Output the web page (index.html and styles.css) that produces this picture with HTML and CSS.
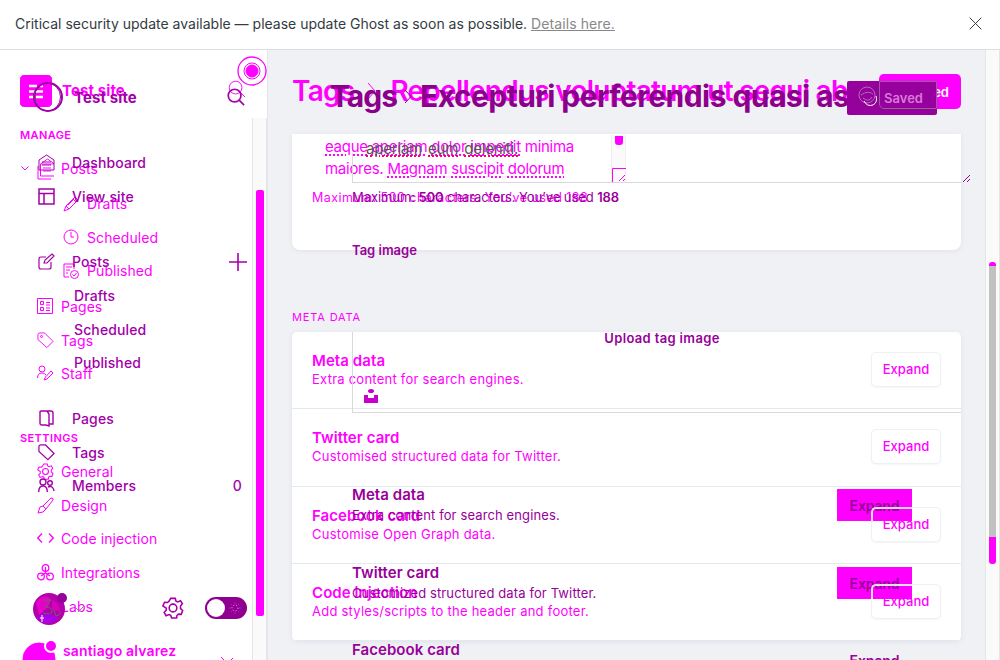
FILE: index.html
```html
<!DOCTYPE html>
<html lang="en">
<head>
<meta charset="utf-8">
<title>Test site - Tags</title>
<link rel="stylesheet" href="styles.css">
</head>
<body>
<svg class="defs" width="0" height="0">
  <symbol id="search" viewBox="0 0 20 20"><circle cx="8" cy="8" r="6.7"/><path d="M13 13l5 5"/></symbol>
  <symbol id="gear" viewBox="0 0 24 24"><circle cx="12" cy="12" r="4.2"/><path d="M9.500 1.500h5l.8 3 1.700.8 3.200-1.300 2 3.400-2 2.400v2.800l2.300 2-1.500 4.300-3.200-.2-1.500 1.500-.3 2.800h-5.500l-1-3-1.700-.8-3.400 1.200-2-3.600 2.200-2.300v-2.400L1 9.700l1.800-4 3.200.3 1.700-1.500z"/></symbol>
  <symbol id="tag" viewBox="0 0 18 18"><path d="M1 3q0-2 2-2h5l9 9-6.500 6.500L1 8z"/></symbol>
</svg>
<div class="app">
  <header class="banner">
    <p>Critical security update available — please update Ghost as soon as possible. <a>Details here.</a></p>
    <svg width="13" height="13" viewBox="0 0 13 13"><path d="M.7.7l11.6 11.6M12.3.7L.7 12.3"/></svg>
  </header>
  <div class="body">
    <aside class="side">
      <nav class="pink nav">
        <div class="brand"><svg width="32" height="32" viewBox="0 0 32 32"><rect width="32" height="32" rx="5" fill="#f0f"/><path d="M9 11h8m3 0h3M9 16.500h14M9 22h4m3 0h7" stroke="#fff" stroke-width="2.500"/></svg><b>Test site</b><svg class="find" width="19" height="19"><use href="#search"/></svg></div>
        <h6>MANAGE</h6>
        <div class="row posts"><svg class="chev" width="8" height="5"><path d="M.5.5L4 4 7.500.5"/></svg><svg width="18" height="22"><path d="M3.500 6h14v12h-14zM1 8v13h13M6 10h8M6 13h8M3.500 6l7-5 7 5"/></svg>Posts</div>
        <div class="row sub"><svg width="16" height="16"><path d="M1 15l2-5L12 1l3 3-9 9zM3 10l3 3M10 3l3 3M5 9l5-5"/></svg>Drafts</div>
        <div class="row sub"><svg width="16" height="16"><circle cx="8" cy="8" r="7"/><path d="M8 3v5h3"/></svg>Scheduled</div>
        <div class="row sub"><svg width="16" height="16"><path d="M6 14H1V1h10v5M3 4h6M3 7h4M3 10h2"/><circle cx="11.500" cy="11.500" r="4"/><path d="M9.500 11.500l1.500 1.500 2.500-3"/></svg>Published</div>
        <div class="row pages"><svg width="17" height="17"><path d="M.5.5h15v15H.5zM3.500 3.500h3v3h-3zM3.500 9.500h3v3h-3zM9 4.500h4M9 7h4M9 10h4M9 12.500h4"/></svg>Pages</div>
        <div class="row"><svg width="17" height="17"><use href="#tag"/><circle cx="4.500" cy="4.500" r="1"/></svg>Tags</div>
        <div class="row"><svg width="17" height="17"><circle cx="5" cy="4" r="3"/><path d="M.5 13q0-5 4.500-5 3 0 4 2M7 15l1.500-3L14 6l2 2-6 6z"/></svg>Staff</div>
        <h6 class="settings">SETTINGS</h6>
        <div class="row"><svg width="17" height="17" stroke-width="1.500"><use href="#gear"/></svg>General</div>
        <div class="row"><svg width="17" height="17"><path d="M6 9l8-8q3 0 2 2L9 12zM6 9q-4 0-4 4l-1 3q6 0 8-4"/></svg>Design</div>
        <div class="row"><svg width="17" height="17" stroke-width="1.300"><path d="M5 3.500L.7 8 5 12.500M12 3.500L16.300 8 12 12.500"/></svg>Code injection</div>
        <div class="row"><svg width="17" height="17" stroke-width="1.300"><circle cx="8.500" cy="4" r="3.300"/><circle cx="4" cy="12.500" r="3.300"/><circle cx="13" cy="12.500" r="3.300"/><path d="M8.500 3v6M4 12l4.500-3 4.500 3"/></svg>Integrations</div>
        <div class="row"><svg width="17" height="17"></svg>Labs</div>
        <div class="user"><svg width="36" height="33"><circle cx="18" cy="19" r="16" fill="#f0f"/><circle cx="30" cy="6" r="6" fill="#f0f" stroke="#fff" stroke-width="2"/></svg><b>santiago alvarez</b><svg class="tick" width="14" height="7"><path d="M1 1l4 4M10 5l3-3"/></svg></div>
      </nav>
      <nav class="plum nav">
        <div class="brand"><svg width="32" height="32"><circle cx="16" cy="16" r="14" stroke-width="2"/><ellipse cx="15.500" cy="16" rx="13" ry="14" stroke-width="1"/><path d="M3 10q-3 7 2 13" stroke="#555"/></svg><b>Test site</b><svg class="find" width="19" height="19" stroke-width="1.800"><use href="#search"/></svg></div>
        <div class="row"><svg width="17" height="17"><path d="M1 6l7.500-5L16 6v10H1zM4 8h9M4 11h9"/></svg>Dashboard</div>
        <div class="row"><svg width="17" height="17"><path d="M1 1h15v15H1zM1 5.500h15M6 5.500v10.500" stroke-width="1.500"/></svg>View site</div>
        <div class="row bposts"><svg width="17" height="17" stroke-width="1.200"><path d="M8 4H3Q1 4 1 6v8q0 2 2 2h8q2 0 2-2V9M6 10l1-3 7-6 2 2-7 7z"/></svg>Posts<svg class="plus" width="18" height="18"><path d="M9 0v18M0 9h18" stroke-width="1.600"/></svg></div>
        <div class="row child">Drafts</div><div class="row child">Scheduled</div><div class="row child">Published</div>
        <div class="row bpages"><svg width="17" height="17"><path d="M2 2q0-1 1-1h6l2 3v12l-3-1H4q-2 0-2-2zM4 1h9q2 0 2 2v11h-4" stroke-width="1.400"/></svg>Pages</div>
        <div class="row"><svg width="17" height="17" stroke-width="1.300"><use href="#tag"/></svg>Tags</div>
        <div class="row"><svg width="17" height="17" stroke-width="1.400"><circle cx="5" cy="5" r="3"/><circle cx="12" cy="6" r="2.300"/><path d="M.7 15q0-6 4.300-6t4.300 6M10 10q5-2 6 4"/></svg>Members<span class="count">0</span></div>
        <div class="tools"><svg width="52" height="36"><circle cx="17" cy="19" r="16" fill="#b400aa" stroke="none"/><path d="M4 12q8-9 15-3l-3 8-9 8z" fill="#e600ca" stroke="none"/><path d="M20 10q7 2 8 12l-8-3z" fill="#d800b8" stroke="none"/><path d="M4 28q9-7 16-3l7 3q-11 10-23 0" fill="#a900e8" stroke="none"/><path d="M11 10h8l-6 7q8 0 7 5-3 3-9 1M22 20l2 6q4-1 5-4" stroke="#666"/><path d="M10 25v7M8 28h4" stroke="#fff"/><circle cx="30" cy="8" r="5" fill="#970099" stroke="none"/><path d="M43 17l4 4 5-5" stroke="#888"/></svg><svg class="cog" width="22" height="22" stroke-width="1.700"><use href="#gear"/></svg><svg width="42" height="22"><rect width="42" height="22" rx="11" fill="#8e0090" stroke="none"/><circle cx="11" cy="11" r="9" fill="#fff" stroke="none"/><circle cx="30" cy="11" r="3" stroke="#e8b8ed" stroke-dasharray="1 2"/><path d="M30 5v2M30 15v2M24 11h2M34 11h2M26 7l1 1M33 14l1 1M26 15l1-1M33 8l1-1" stroke="#e000e4"/></svg></div>
      </nav>
      <div class="track"><i></i></div>
      <svg class="target" width="30" height="30"><circle cx="15" cy="15" r="14" stroke-width="1.300"/><circle cx="15" cy="15" r="8"/><circle cx="15" cy="15" r="6" fill="#f0f"/></svg>
    </aside>
    <main>
      <section class="card first">
        <div class="field"><p><u>eaque</u> <u>aperiam</u> <u>dolor</u> <u>impedit</u> minima</p><p class="l2">maiores. <u>Magnam</u> <u>suscipit</u> <u>dolorum</u></p></div>
        <div class="mini"><i></i><svg width="14" height="14"><path d="M.5 14V.5H14M7 13l6-6M11 13l2-2"/></svg></div>
        <p class="max">Maximum: 500 characters. You’ve used 188</p>
      </section>
      <h6 class="label">META DATA</h6>
      <section class="card list">
        <article><div><b>Meta data</b><p>Extra content for search engines.</p></div><button>Expand</button></article>
        <article><div><b>Twitter card</b><p>Customised structured data for Twitter.</p></div><button>Expand</button></article>
        <article><div><b>Facebook card</b><p>Customise Open Graph data.</p></div><button>Expand</button></article>
        <article><div><b>Code injection</b><p>Add styles/scripts to the header and footer.</p></div><button>Expand</button></article>
      </section>
      <div class="heading h-pink"><span>Tags</span><svg width="9" height="18"><path d="M1 1l7 8-7 8"/></svg><span class="name">Repellendus voluptatum ut sequi ab</span></div>
      <div class="heading h-plum"><span>Tags</span><svg width="8" height="15"><path d="M1 1l6 6.500L1 14"/></svg><span class="name">Excepturi perferendis quasi as</span></div>
      <div class="save bright">Saved</div>
      <div class="save dark"><svg width="28" height="26"><circle cx="12" cy="10" r="8" stroke="#aa70b2"/><path d="M6 10q7-5 12-1M8 13q6 5 9-1" stroke="#aa70b2"/><path d="M9 16q3 6 9 4 5-3 3-9" stroke="#fff"/></svg><span>Saved</span></div>
      <div class="save edge"></div>
      <div class="sheet">
        <div class="box text"><s>aperiam</s> <s>eum</s> <s>deleniti.</s></div>
        <svg class="grip" width="8" height="8"><path d="M0 8l7-7M4 8l3-3"/></svg>
        <p class="bmax">Maximum: <b>500</b> characters. You’ve used <b>188</b></p>
        <b class="tagimg">Tag image</b>
        <div class="box upload"><b>Upload tag image</b><svg width="14" height="14"><rect y="6" width="14" height="8"/><ellipse cx="7" cy="2" rx="3" ry="2"/><path d="M4 6h6v3H4z" fill="#fff"/></svg></div>
        <div class="entry"><div><b>Meta data</b><p>Extra content for search engines.</p></div><span>Expand</span></div>
        <div class="entry"><div><b>Twitter card</b><p>Customized structured data for Twitter.</p></div><span>Expand</span></div>
        <div class="entry"><div><b>Facebook card</b></div><em>Expand</em></div>
      </div>
      <div class="outlines"><div></div><div></div></div>
    </main>
    <div class="scroll"><i></i></div>
  </div>
</div>
</body>
</html>
```
FILE: styles.css
```css
* { box-sizing: border-box; }
body { margin: 0; font-family: Inter, "Liberation Sans", sans-serif; font-size: 14px; overflow: hidden; }
p, h6 { margin: 0; font-weight: 400; }
.defs { position: absolute; }
svg { fill: none; stroke: currentColor; flex: none; }
.app { width: 1000px; height: 660px; overflow: hidden; display: flex; flex-direction: column; background: #f0f1f5; }
.banner { height: 50px; flex: none; background: #fff; border-bottom: 1px solid #dcdfe1; display: flex; align-items: center; justify-content: space-between; padding: 0 18px 2px 15px; color: #333b43; }
.banner a { color: #888; text-decoration: underline; letter-spacing: .1px; }
.body { height: 610px; display: flex; }
.side { width: 268px; flex: none; background: #fff; border-right: 1px solid #e4e6e9; position: relative; overflow: hidden; }
.pink { color: #f0f; }
.plum { color: #a200a8; }
.nav { position: absolute; inset: 0; display: flex; flex-direction: column; z-index: 2; }
.row { height: 33.700px; flex: none; display: flex; align-items: center; gap: 7px; padding-left: 37px; letter-spacing: .08px; position: relative; }
.brand { display: flex; align-items: center; font-size: 15px; flex: none; position: relative; }
.user b { font-weight: 600; }
.brand b { font-weight: 700; letter-spacing: .1px; }
.find { margin-left: auto; }
.pink .brand { height: 32px; margin: 25px 20px 0; gap: 10px; }
.pink .brand b { margin-top: -2px; }
.pink .find { margin-top: -4px; }
.pink .row svg:not(.chev) { width: 17px; }
.chev { position: absolute; left: 21px; }
h6 { font-size: 11px; line-height: 14px; font-weight: 600; letter-spacing: .4px; }
.pink h6 { margin: 21px 20px 10px; flex: none; }
.pink .sub { padding-left: 63px; gap: 7px; }
.posts { margin-bottom: 1px; }
.pages { margin-top: 2px; }
.pink .settings { margin: 40px 20px 9.800px; }
.user { display: flex; height: 38px; flex: none; gap: 3px; padding: 0 30px 0 24px; margin-top: 17px; }
.user svg { margin-left: -3px; }
.user b { margin-top: 2px; letter-spacing: .15px; padding-left: 3px; }
.user .tick { margin: 16px 3px 0 auto; }
.plum .brand { height: 32px; margin: 31px 21px 33px 32px; gap: 10px; }
.plum .row { gap: 17px; padding-left: 38px; letter-spacing: .12px; font-weight: 500; }
.bposts { margin-top: 31.500px; }
.plus { margin-left: auto; margin-right: 20px; }
.plum .child { padding-left: 74px; }
.bpages { margin-top: 22px; }
.count { margin-left: auto; margin-right: 25px; font-weight: 500; }
.tools { display: flex; align-items: center; margin: 86.500px 20px 0 32px; height: 38px; }
.cog { margin: 0 21px 0 auto; }
.track { position: absolute; z-index: 3; left: 252px; top: 68px; bottom: 0; width: 15px; background: #fafafa; border: 1px solid #e6e6e6; border-width: 0 1px; padding: 72px 3px 0; }
.track i { display: block; width: 8px; height: 426px; border-radius: 2px; background: #f0f; }
.target { position: absolute; right: 0; top: 6px; color: #f0f; z-index: 4; }
main { flex: 1; position: relative; padding: 84px 24px 0; overflow: hidden; }
.card { background: #fff; width: 669px; box-shadow: 0 1px 4px #c8ccd566; }
.first { height: 116px; border-radius: 0 0 8px 8px; position: relative; color: #f0f; }
.field { padding: 2px 0 0 33px; line-height: 22px; font-size: 15px; letter-spacing: -.27px; height: 48px; }
u { text-decoration: underline dotted 2px; text-underline-offset: 2px; }
.mini { position: absolute; left: 319px; top: 1px; width: 15px; height: 47px; background: #fafafa; border: 1px solid #eee; border-width: 0 1px; display: flex; flex-direction: column; justify-content: space-between; color: #f0f; }
.mini i { background: #f0f; width: 8px; height: 9px; margin: 1px 3px; border-radius: 0 0 3px 3px; }
.max { padding: 7px 20px; font-size: 12.500px; line-height: 18px; letter-spacing: .45px; }
.label { color: #f0f; margin: 60px 0 8px; font-weight: 400; letter-spacing: .85px; }
.list { color: #f0f; border-radius: 5px; overflow: hidden; }
article { height: 77.250px; border-bottom: 1px solid #e0eaf0; padding: 0 20px 1px; display: flex; justify-content: space-between; align-items: center; }
article b { font-size: 15px; font-weight: 600; line-height: 19px; letter-spacing: .08px; }
article p { font-size: 13px; line-height: 18px; letter-spacing: .24px; }
button { font: 500 13px Inter, sans-serif; color: #f0f; width: 70px; height: 35px; border: 1px solid #eef1f4; border-radius: 5px; background: #fff; box-shadow: 0 1px 2px #0000000b; padding: 0 0 1px; }
.heading { position: absolute; top: 21px; left: 24px; height: 40px; display: flex; align-items: center; color: #f0f; font-size: 28px; font-weight: 600; white-space: nowrap; letter-spacing: -.75px; }
.heading svg { margin: 0 14px 0 13px; }
.h-plum { left: 62px; top: 26px; width: 519px; overflow: hidden; color: #8b008b; font-size: 30px; font-weight: 700; letter-spacing: -.55px; }
.h-plum svg { margin: 1px 8px 0 7px; }
.h-plum span:first-child { letter-spacing: -1px; }
.save { position: absolute; left: 611px; top: 24px; width: 82px; height: 35px; border-radius: 5px; background: #f0f; color: #fff; display: flex; align-items: center; justify-content: flex-end; padding-right: 12px; font-size: 13px; font-weight: 600; }
.dark { left: 579px; top: 31px; width: 90px; height: 34px; border-radius: 2px; background: #96009c; padding: 0 14px 0 8px; justify-content: space-between; color: #d67bd9; }
.edge { top: 31px; width: 58px; height: 28px; background: none; border: 1px solid #8e6593; border-radius: 0 0 0 5px; }
.sheet { position: absolute; left: 84px; top: 103px; width: 609px; color: #970099; }
.box { border: 1px solid #d9d9dc; border-width: 0 0 1px 1px; }
.text { height: 30px; color: #555; line-height: 1; font-size: 15px; letter-spacing: -.2px; padding-left: 13px; display: flex; align-items: flex-start; gap: 6px; }
.text s { margin-top: -12px; text-decoration: underline dotted #f06 2px; }
.grip { position: absolute; right: -10px; top: 21px; }
.bmax { margin-top: 6px; font-size: 13px; line-height: 16px; letter-spacing: -.08px; }
.sheet b { font-weight: 600; }
.tagimg { display: block; margin-top: 37px; line-height: 17px; font-size: 13px; }
.upload { margin-top: 73px; height: 81px; position: relative; font-size: 13px; text-align: center; padding-left: 10px; line-height: 12px; letter-spacing: .35px; }
.upload svg { position: absolute; left: 11px; top: 57px; fill: #c800cf; stroke: none; }
.entry { display: flex; justify-content: space-between; margin-top: 72px; height: 40px; }
.entry + .entry { margin-top: 37.500px; }
.entry b { font-size: 15px; line-height: 19px; letter-spacing: .05px; }
.entry p { font-size: 13px; line-height: 22px; letter-spacing: .12px; }
.entry span, .entry em { width: 75px; height: 32px; margin: 4px 49px 0 0; background: #f0f; font: 600 14px/33px Inter, sans-serif; text-align: center; letter-spacing: -.15px; }
.entry em { background: none; }
.outlines { position: absolute; left: 603px; top: 457px; display: grid; gap: 62px; }
.outlines div { width: 41px; height: 15px; border: 2px solid #dfe1e5; border-width: 2px 0 0 2px; border-top-left-radius: 5px; }
.scroll { width: 15px; background: #fafafa; border: 1px solid #e6e6e6; border-width: 0 1px; padding: 212px 3px 0; }
.scroll i { display: block; height: 302px; border-radius: 3px; background: linear-gradient(#f0f 4px, #c1c1c1 4px, #c1c1c1 275px, #f0f 275px); }
```
